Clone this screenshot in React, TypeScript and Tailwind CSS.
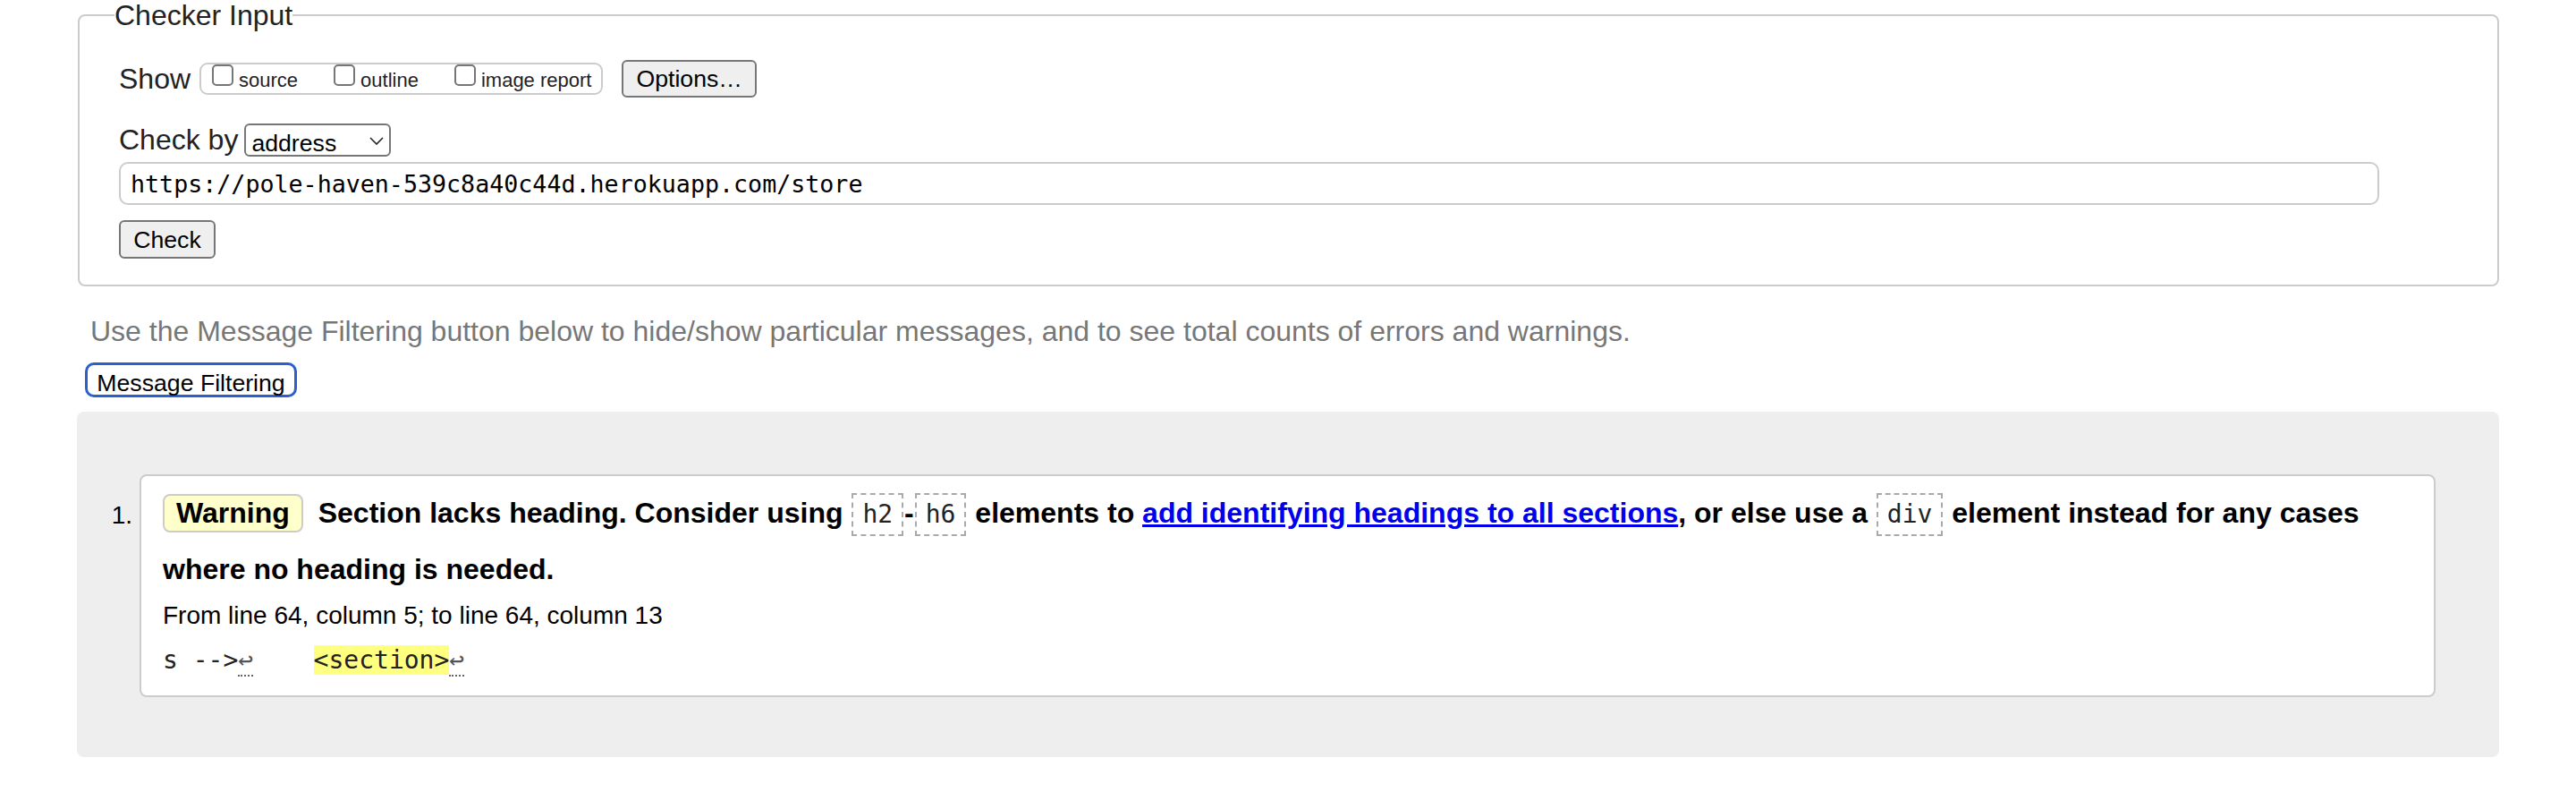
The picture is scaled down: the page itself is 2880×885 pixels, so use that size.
import React from "react";

const options = ["source", "outline", "image report"];

function Code({ children }: { children: React.ReactNode }) {
  return (
    <code className="mx-px inline-block border-2 border-dashed border-[#aaaaaa] px-[10px] font-['DejaVu_Sans_Mono',monospace] text-[28px] font-normal leading-[44px] text-[#222]">
      {children}
    </code>
  );
}

function LineFeed() {
  return <span className="border-b-2 border-dotted border-[#666] text-[#555]">↩</span>;
}

export default function App() {
  return (
    <div className="min-h-[885px] bg-white font-['Liberation_Sans',Arial,sans-serif] text-[#222]">
      <div className="ml-[86px] w-[2708px]">
        {/* checker input form */}
        <fieldset className="ml-px rounded-[8px] border-2 border-[#cccccc] pb-[29px] pl-[44px]">
          <legend className="-ml-[5px] text-[32px] leading-[34px] text-[#222]">Checker Input</legend>

          <div className="mt-[33px] flex h-[42px] items-center">
            <span className="text-[32px] leading-[42px]">Show</span>
            <div className="ml-[10px] flex h-[36px] items-start rounded-[9px] border-2 border-[#cccccc] pl-[12px] pr-[11px]">
              {options.map((o, i) => (
                <label key={o} className={i > 0 ? "ml-[40px] flex items-start" : "flex items-start"}>
                  <input
                    type="checkbox"
                    className="h-[24px] w-[24px] appearance-none rounded-[5px] border-2 border-[#767676] bg-white"
                  />
                  <span className="ml-[6px] mt-[5px] text-[22px] leading-[26px]">{o}</span>
                </label>
              ))}
            </div>
            <button className="ml-[21px] h-[42px] rounded-[6px] border-2 border-[#767676] bg-[#efefef] px-[14px] text-[26.67px] leading-[34px] text-black">
              Options…
            </button>
          </div>

          <div className="mt-[29px] flex h-[37px] items-center">
            <span className="text-[32px] leading-[37px]">Check by</span>
            <div className="relative ml-[7px]">
              <select className="block h-[37px] w-[164px] appearance-none rounded-[6px] border-2 border-[#767676] bg-white pl-[6px] text-[26.67px] text-black">
                <option>address</option>
              </select>
              <svg
                className="pointer-events-none absolute right-[8px] top-[15px]"
                width="16"
                height="9"
                viewBox="0 0 16 9"
              >
                <path d="M1 1l7 7 7-7" fill="none" stroke="#222" strokeWidth="1.6" />
              </svg>
            </div>
          </div>

          <input
            readOnly
            value="https://pole-haven-539c8a40c44d.herokuapp.com/store"
            className="mt-[6px] block h-[48px] w-[2527px] rounded-[10px] border-2 border-[#cccccc] px-[11px] font-['DejaVu_Sans_Mono',monospace] text-[26.67px] text-black"
          />

          <button className="mt-[17px] block h-[43px] w-[108px] rounded-[6px] border-2 border-[#767676] bg-[#efefef] text-[26.67px] text-black">
            Check
          </button>
        </fieldset>

        <p className="mt-[30px] pl-[15px] text-[32px] leading-[40px] text-[#777]">
          Use the Message Filtering button below to hide/show particular messages, and to see total counts of errors and
          warnings.
        </p>

        <button className="ml-[9px] mt-[15px] block h-[39px] w-[237px] rounded-[10px] border-[3px] border-[#2c5fc7] bg-white text-[26.67px] text-black">
          Message Filtering
        </button>

        {/* results */}
        <div className="mt-[16px] flex rounded-[8px] bg-[#eeeeee] pb-[67px] pr-[71px] pt-[70px]">
          <div className="w-[70px] shrink-0 pr-[8px] pt-[30px] text-right text-[28px] leading-[32px] text-black">1.</div>
          <div className="flex-1 rounded-[8px] border-2 border-[#cccccc] bg-white px-[24px] pb-[19px] pt-[10px] text-black">
            <p className="text-[32px] font-bold leading-[63px]">
              <span className="mr-[8px] inline-block rounded-[8px] border-2 border-[#cccccc] bg-[#ffffcc] px-[13px] leading-[39px]">
                Warning
              </span>{" "}
              Section lacks heading. Consider using <Code>h2</Code>-<Code>h6</Code> elements to{" "}
              <a href="#" className="text-[#0000ee] underline">
                add identifying headings to all sections
              </a>
              , or else use a <Code>div</Code> element instead for any cases where no heading is needed.
            </p>
            <p className="text-[28px] leading-[40px]">From line 64, column 5; to line 64, column 13</p>
            <p className="mt-[10px] whitespace-pre font-['DejaVu_Sans_Mono',monospace] text-[28px] leading-[40px] text-[#222]">
              {"s -->"}
              <LineFeed />
              {"    "}
              <span className="bg-[#ffff80]">{"<section>"}</span>
              <LineFeed />
            </p>
          </div>
        </div>
      </div>
    </div>
  );
}
